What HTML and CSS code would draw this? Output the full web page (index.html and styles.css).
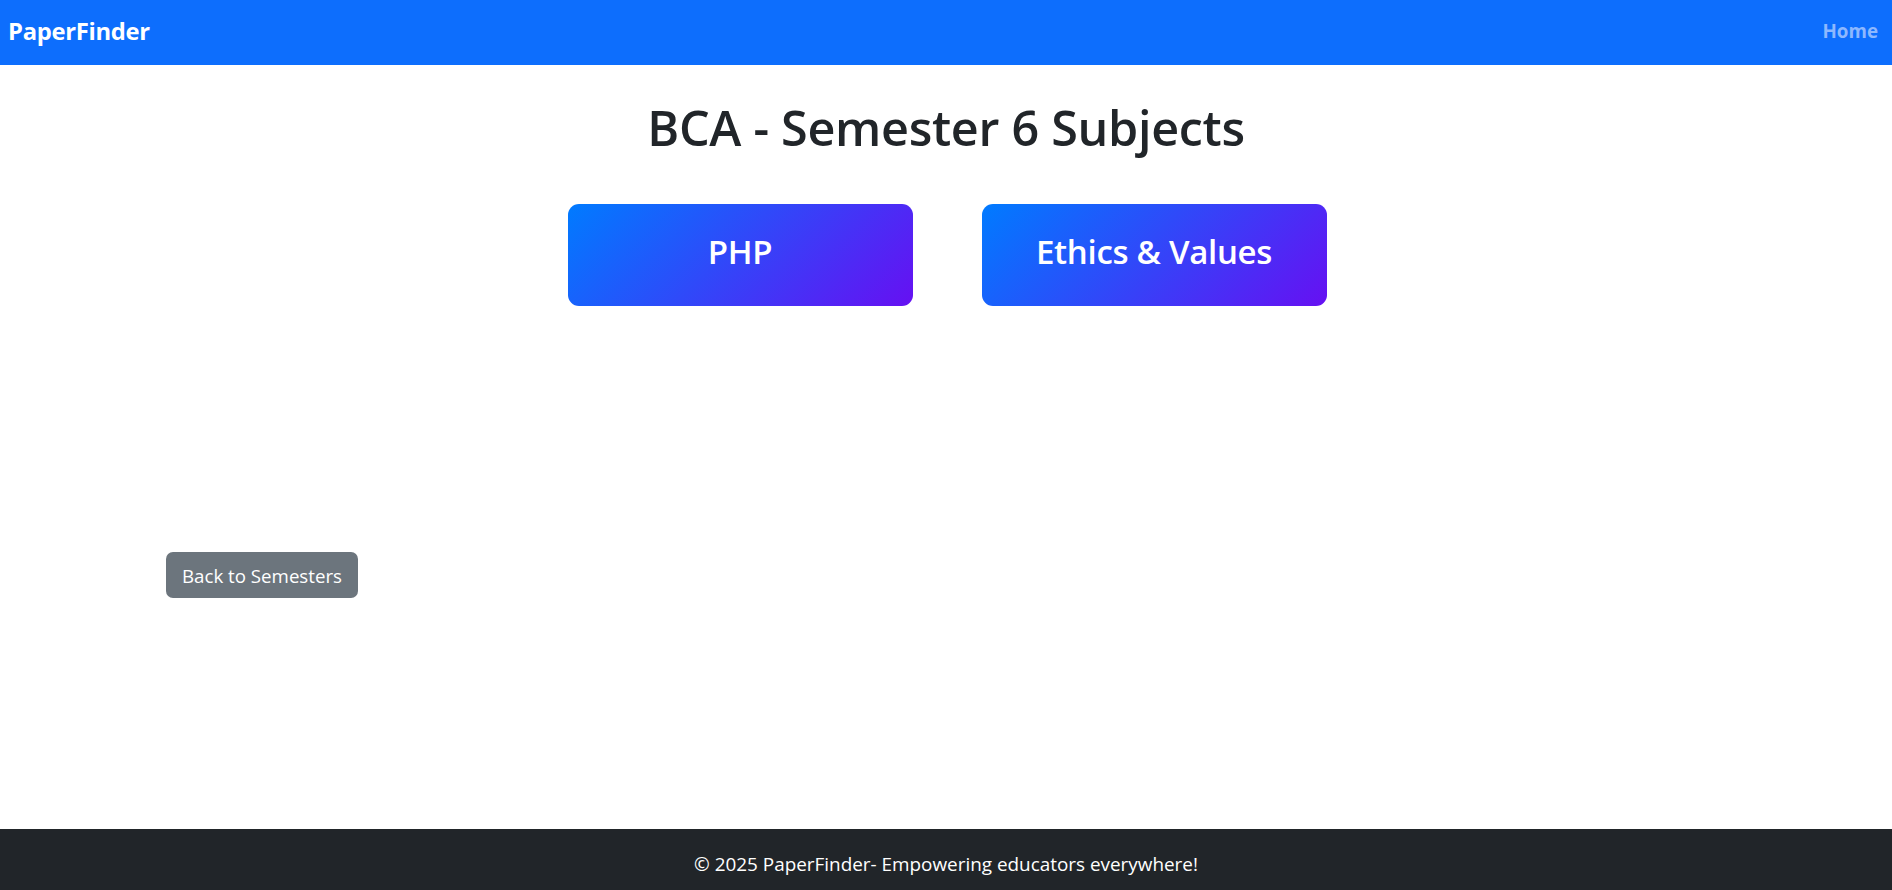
FILE: index.html
```html
<!DOCTYPE html>
<html lang="en">
<head>
<meta charset="utf-8">
<title>PaperFinder - BCA Semester 6</title>
<link rel="stylesheet" href="styles.css">
</head>
<body>
<div class="page">
  <nav class="navbar">
    <a class="brand" href="#">PaperFinder</a>
    <a class="nav-link" href="#">Home</a>
  </nav>
  <main class="main">
    <h1 class="title">BCA - Semester 6 Subjects</h1>
    <div class="subjects">
      <a class="subject-card" href="#">PHP</a>
      <a class="subject-card" href="#">Ethics &amp; Values</a>
    </div>
    <div class="container">
      <a class="btn-back" href="#">Back to Semesters</a>
    </div>
  </main>
  <footer class="footer">© 2025 PaperFinder- Empowering educators everywhere!</footer>
</div>
</body>
</html>
```
FILE: styles.css
```css
* { box-sizing: border-box; }
html, body { margin: 0; padding: 0; }
body {
  font-family: "Open Sans", "Noto Sans", "Liberation Sans", sans-serif;
  color: #212529;
  background: #fff;
}
a { text-decoration: none; }
.page {
  min-height: 890px;
  display: flex;
  flex-direction: column;
}
.navbar {
  height: 65px;
  background: #0d6efd;
  display: flex;
  align-items: center;
  justify-content: space-between;
  padding: 0 14px 4px 8px;
}
.brand {
  color: #fff;
  font-weight: 700;
  font-size: 23.8px;
  letter-spacing: -0.3px;
}
.nav-link {
  color: #8db8fe;
  font-weight: 700;
  font-size: 18.8px;
}
.main {
  flex: 1;
  display: flex;
  flex-direction: column;
}
.title {
  margin: 29px 0 0;
  text-align: center;
  font-size: 48.5px;
  font-weight: 600;
  line-height: 66px;
  letter-spacing: -0.3px;
}
.subjects {
  margin-top: 44px;
  display: flex;
  justify-content: center;
  gap: 69px;
  padding-left: 2px;
}
.subject-card {
  width: 345px;
  height: 102px;
  border-radius: 11px;
  background: linear-gradient(135deg, #007bff 0%, #6610f2 100%);
  color: #fff;
  display: flex;
  align-items: center;
  justify-content: center;
  padding-bottom: 8px;
  font-size: 33px;
  font-weight: 600;
  letter-spacing: -0.3px;
}
.container {
  margin-top: 246px;
  padding-left: 166px;
}
.btn-back {
  display: inline-flex;
  align-items: center;
  height: 46px;
  padding: 0 16px;
  background: #6c757d;
  color: #fff;
  border-radius: 7px;
  font-size: 18.7px;
}
.footer {
  height: 61px;
  background: #212529;
  color: #fff;
  display: flex;
  align-items: center;
  justify-content: center;
  padding-top: 9px;
  font-size: 18.9px;
}
```
